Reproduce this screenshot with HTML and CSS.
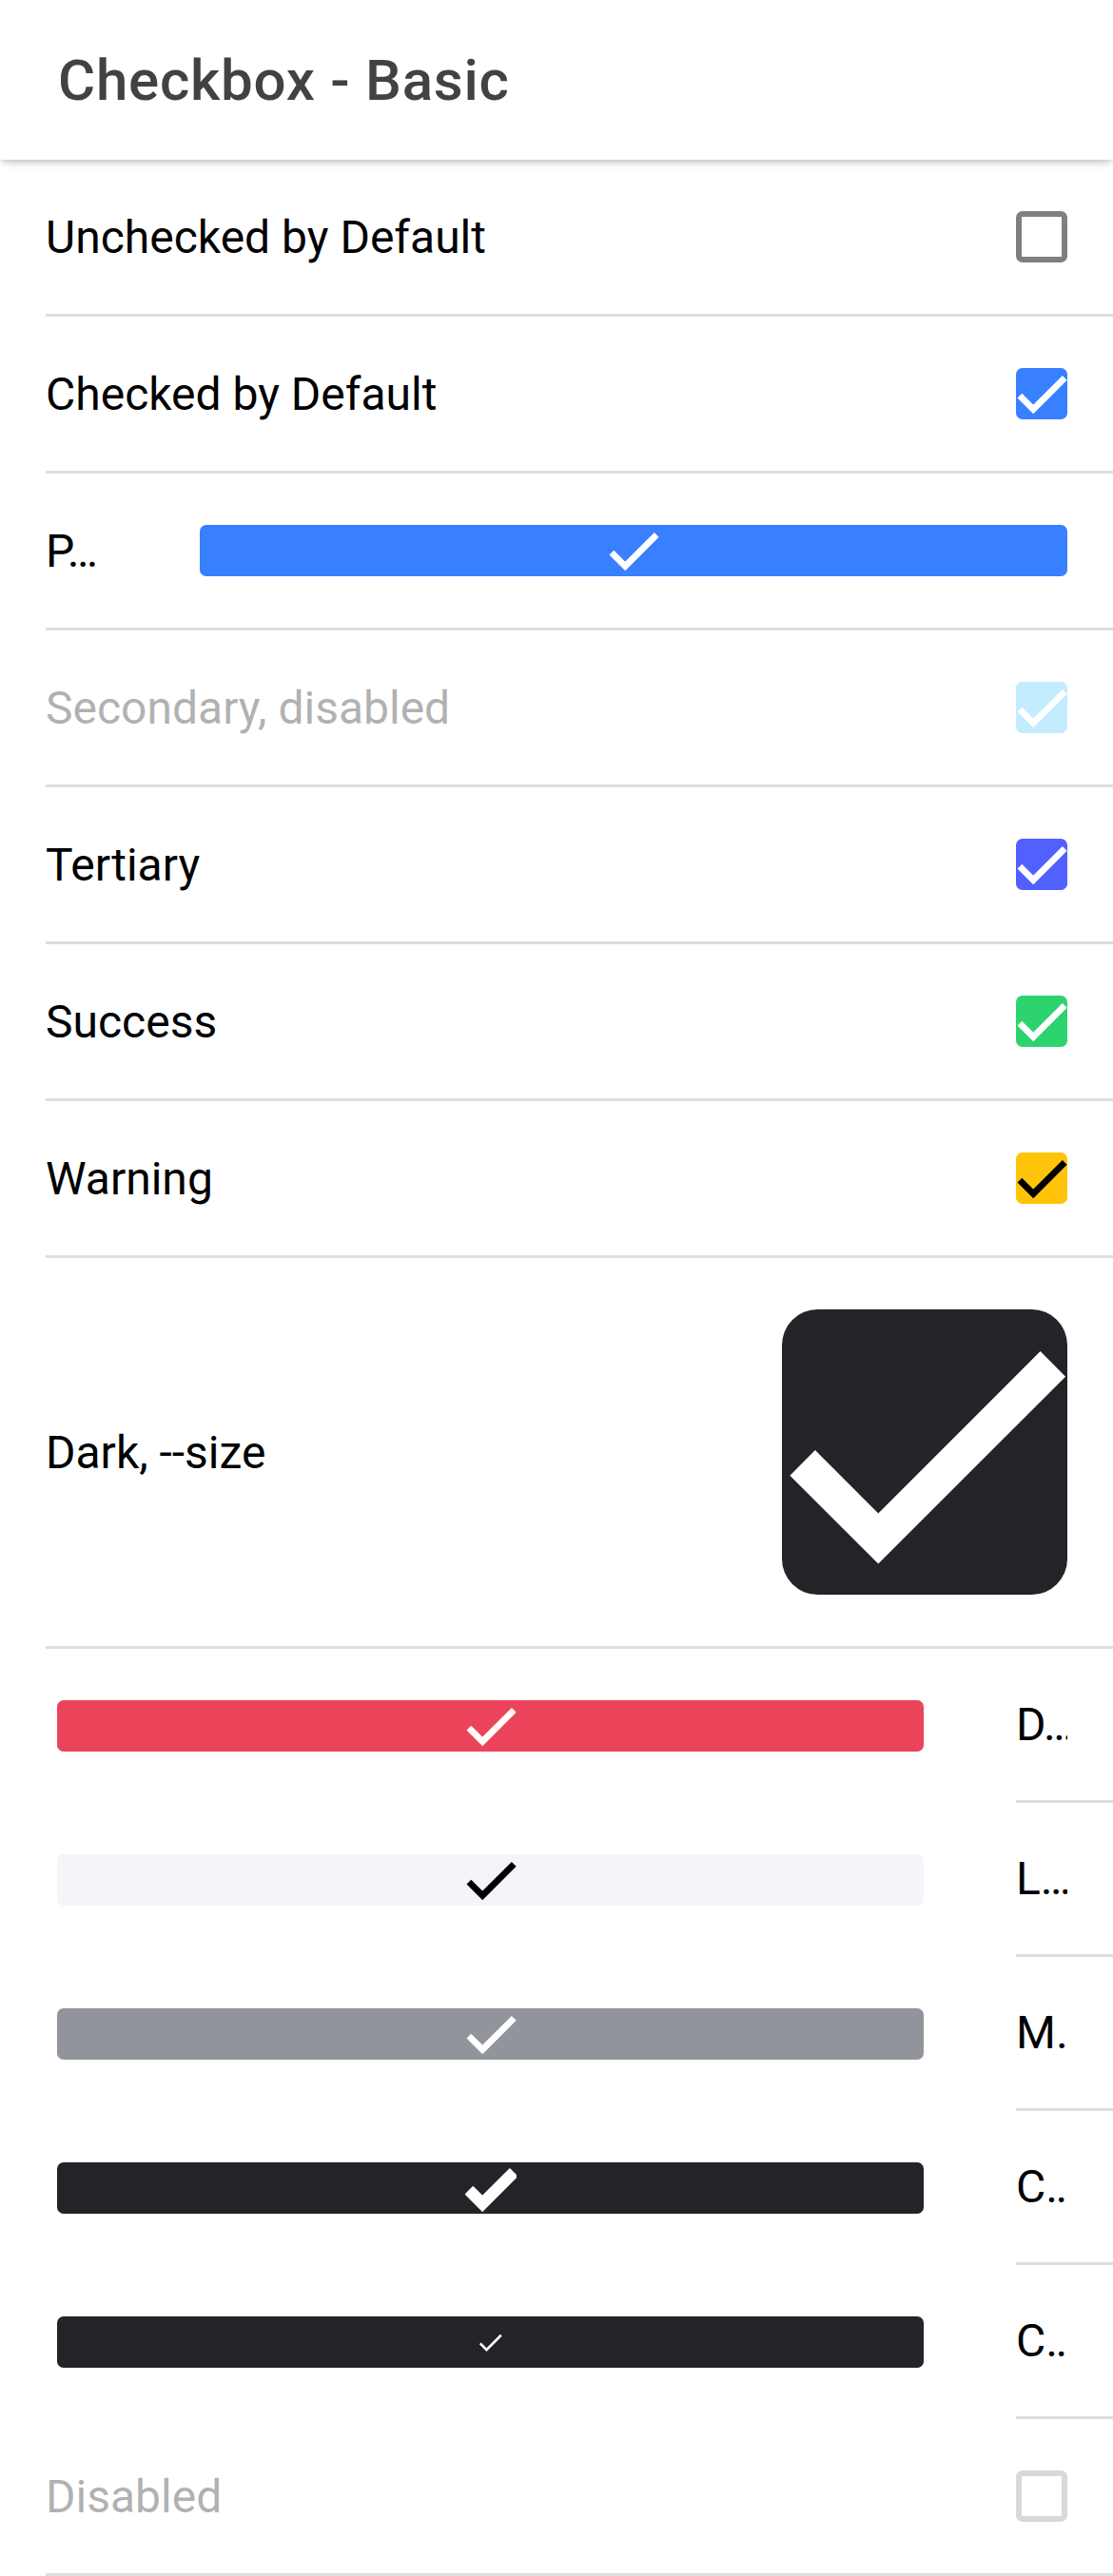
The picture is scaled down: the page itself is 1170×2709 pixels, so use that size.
FILE: index.html
```html
<!DOCTYPE html>
<html lang="en">
<head>
<meta charset="utf-8">
<title>Checkbox - Basic</title>
<link rel="stylesheet" href="styles.css">
</head>
<body>
<header class="toolbar">
  <h1 class="title">Checkbox - Basic</h1>
</header>
<main class="list">
  <div class="item">
    <div class="inner">
      <span class="label">Unchecked by Default</span>
      <span class="cb cb-empty"></span>
    </div>
  </div>
  <div class="item">
    <div class="inner">
      <span class="label">Checked by Default</span>
      <span class="cb c-primary"><svg class="ck" viewBox="0 0 24 24"><path d="M1.73,12.91 8.1,19.28 22.79,4.59"/></svg></span>
    </div>
  </div>
  <div class="item">
    <div class="inner">
      <span class="label label-clip">P…</span>
      <span class="cb cb-wide c-primary"><svg class="ck" viewBox="0 0 24 24"><path d="M1.73,12.91 8.1,19.28 22.79,4.59"/></svg></span>
    </div>
  </div>
  <div class="item">
    <div class="inner">
      <span class="label faded">Secondary, disabled</span>
      <span class="cb c-secondary faded"><svg class="ck" viewBox="0 0 24 24"><path d="M1.73,12.91 8.1,19.28 22.79,4.59"/></svg></span>
    </div>
  </div>
  <div class="item">
    <div class="inner">
      <span class="label">Tertiary</span>
      <span class="cb c-tertiary"><svg class="ck" viewBox="0 0 24 24"><path d="M1.73,12.91 8.1,19.28 22.79,4.59"/></svg></span>
    </div>
  </div>
  <div class="item">
    <div class="inner">
      <span class="label">Success</span>
      <span class="cb c-success"><svg class="ck" viewBox="0 0 24 24"><path d="M1.73,12.91 8.1,19.28 22.79,4.59"/></svg></span>
    </div>
  </div>
  <div class="item">
    <div class="inner">
      <span class="label">Warning</span>
      <span class="cb c-warning"><svg class="ck ck-dark" viewBox="0 0 24 24"><path d="M1.73,12.91 8.1,19.28 22.79,4.59"/></svg></span>
    </div>
  </div>
  <div class="item">
    <div class="inner">
      <span class="label">Dark, --size</span>
      <span class="cb cb-big c-dark"><svg class="ck ck-big" viewBox="0 0 24 24"><path d="M1.73,12.91 8.1,19.28 22.79,4.59"/></svg></span>
    </div>
  </div>

  <div class="item item-end">
    <span class="cb cb-bar c-danger"><svg class="ck" viewBox="0 0 24 24"><path d="M1.73,12.91 8.1,19.28 22.79,4.59"/></svg></span>
    <div class="inner-end"><span class="label label-end">D…</span></div>
  </div>
  <div class="item item-end">
    <span class="cb cb-bar c-light"><svg class="ck ck-dark" viewBox="0 0 24 24"><path d="M1.73,12.91 8.1,19.28 22.79,4.59"/></svg></span>
    <div class="inner-end"><span class="label label-end">L…</span></div>
  </div>
  <div class="item item-end">
    <span class="cb cb-bar c-medium"><svg class="ck" viewBox="0 0 24 24"><path d="M1.73,12.91 8.1,19.28 22.79,4.59"/></svg></span>
    <div class="inner-end"><span class="label label-end">M…</span></div>
  </div>
  <div class="item item-end">
    <span class="cb cb-bar c-dark"><svg class="ck ck-thick" viewBox="0 0 24 24"><path d="M1.73,12.91 8.1,19.28 22.79,4.59"/></svg></span>
    <div class="inner-end"><span class="label label-end">C…</span></div>
  </div>
  <div class="item item-end">
    <span class="cb cb-bar c-dark"><svg class="ck ck-tiny" viewBox="0 0 24 24"><path d="M1.73,12.91 8.1,19.28 22.79,4.59"/></svg></span>
    <div class="inner-end"><span class="label label-end">C…</span></div>
  </div>

  <div class="item">
    <div class="inner">
      <span class="label faded">Disabled</span>
      <span class="cb cb-empty faded"></span>
    </div>
  </div>
</main>
</body>
</html>
```

FILE: styles.css
```css
* {
  box-sizing: border-box;
}

html, body {
  margin: 0;
  padding: 0;
  background: #ffffff;
}

body {
  font-family: Roboto, "Helvetica Neue", "Liberation Sans", sans-serif;
  color: #000000;
  width: 1170px;
  overflow: hidden;
}

.toolbar {
  position: relative;
  z-index: 2;
  height: 168px;
  display: flex;
  align-items: center;
  background: #ffffff;
  box-shadow: 0 3px 6px -1px rgba(0, 0, 0, 0.18), 0 8px 10px -4px rgba(0, 0, 0, 0.10);
}

.title {
  margin: 0;
  padding-left: 61px;
  font-size: 60px;
  font-weight: 500;
  letter-spacing: 0.0125em;
  color: #424242;
}

.list {
  display: flex;
  flex-direction: column;
}

.item {
  display: flex;
  padding-left: 48px;
}

.inner {
  flex: 1;
  display: flex;
  align-items: center;
  padding-right: 48px;
  border-bottom: 3px solid #dedede;
}

.label {
  flex: 1;
  font-size: 48px;
  white-space: nowrap;
  overflow: hidden;
}

.label-clip {
  flex: 0 0 62px;
  width: 62px;
  margin-right: 100px;
}

.faded {
  opacity: 0.3;
}

.cb {
  flex: 0 0 auto;
  width: 54px;
  height: 54px;
  margin: 54px 0;
  border-radius: 6.75px;
  display: flex;
  align-items: center;
  justify-content: center;
}

.cb-empty {
  border: 6px solid #7f7f7f;
  background: #ffffff;
}

.cb-wide {
  flex: 1;
  width: auto;
}

.cb-big {
  width: 300px;
  height: 300px;
  border-radius: 37.5px;
}

.ck {
  width: 54px;
  height: 54px;
  fill: none;
  stroke: #ffffff;
  stroke-width: 3;
  stroke-linecap: butt;
  stroke-linejoin: miter;
}

.ck-dark {
  stroke: #000000;
}

.ck-big {
  width: 300px;
  height: 300px;
}

.ck-thick {
  stroke-width: 5.5;
}

.ck-tiny {
  width: 25px;
  height: 25px;
  stroke-width: 2.5;
}

.c-primary { background: #3880ff; }
.c-secondary { background: #3dc2ff; }
.c-tertiary { background: #5260ff; }
.c-success { background: #2dd36f; }
.c-warning { background: #ffc409; }
.c-danger { background: #eb445a; }
.c-light { background: #f4f5f8; }
.c-medium { background: #92949c; }
.c-dark { background: #222428; }

.item-end {
  padding-left: 60px;
  height: 162px;
  align-items: stretch;
}

.cb-bar {
  width: 911px;
  margin: 54px 97px 54px 0;
}

.inner-end {
  flex: 1;
  display: flex;
  align-items: center;
  padding-right: 48px;
  border-bottom: 3px solid #dedede;
}

.label-end {
  flex: 0 0 54px;
  width: 54px;
}
```
